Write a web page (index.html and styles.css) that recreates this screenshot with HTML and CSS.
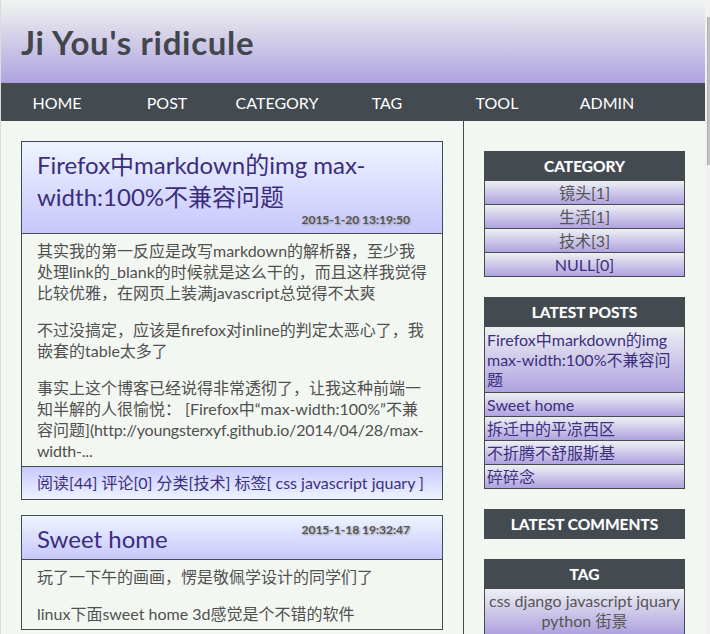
FILE: index.html
```html
<!DOCTYPE html>
<html lang="zh">
<head>
<meta charset="utf-8">
<title>Ji You's ridicule</title>
<link rel="stylesheet" href="styles.css">
</head>
<body>
<header class="site-header">
  <h1 class="site-title">Ji You's ridicule</h1>
</header>
<nav class="site-nav">
  <ul class="nav-list">
    <li><a href="#">HOME</a></li>
    <li><a href="#">POST</a></li>
    <li><a href="#">CATEGORY</a></li>
    <li><a href="#">TAG</a></li>
    <li><a href="#">TOOL</a></li>
    <li><a href="#">ADMIN</a></li>
  </ul>
</nav>
<div class="layout">
  <main class="main-col">
    <article class="post">
      <div class="post-head">
        <h2 class="post-title"><a href="#">Firefox中markdown的img max-width:100%不兼容问题</a></h2>
        <span class="post-date">2015-1-20 13:19:50</span>
      </div>
      <div class="post-body">
        <p>其实我的第一反应是改写markdown的解析器，至少我处理link的_blank的时候就是这么干的，而且这样我觉得比较优雅，在网页上装满javascript总觉得不太爽</p>
        <p>不过没搞定，应该是firefox对inline的判定太恶心了，我嵌套的table太多了</p>
        <p>事实上这个博客已经说得非常透彻了，让我这种前端一知半解的人很愉悦： [Firefox中“max-width:100%”不兼容问题]<span class="url">(http://youngsterxyf.github.io/2014/04/28/max-width-...</span></p>
      </div>
      <div class="post-foot"><a href="#">阅读[44] 评论[0] 分类[技术] 标签[ css javascript jquary ]</a></div>
    </article>
    <article class="post">
      <div class="post-head">
        <h2 class="post-title"><a href="#">Sweet home</a></h2>
        <span class="post-date">2015-1-18 19:32:47</span>
      </div>
      <div class="post-body">
        <p>玩了一下午的画画，愣是敬佩学设计的同学们了</p>
        <p>linux下面sweet home 3d感觉是个不错的软件</p>
      </div>
    </article>
  </main>
  <aside class="sidebar">
    <section class="widget">
      <h3 class="widget-head">CATEGORY</h3>
      <ul class="widget-list centered">
        <li class="plain">镜头[1]</li>
        <li class="plain">生活[1]</li>
        <li class="plain">技术[3]</li>
        <li><a href="#">NULL[0]</a></li>
      </ul>
    </section>
    <section class="widget">
      <h3 class="widget-head">LATEST POSTS</h3>
      <ul class="widget-list">
        <li><a href="#">Firefox中markdown的img max-width:100%不兼容问题</a></li>
        <li><a href="#">Sweet home</a></li>
        <li><a href="#">拆迁中的平凉西区</a></li>
        <li><a href="#">不折腾不舒服斯基</a></li>
        <li><a href="#">碎碎念</a></li>
      </ul>
    </section>
    <section class="widget">
      <h3 class="widget-head">LATEST COMMENTS</h3>
    </section>
    <section class="widget">
      <h3 class="widget-head">TAG</h3>
      <div class="tag-cloud">css django javascript jquary python 街景</div>
    </section>
  </aside>
</div>
<div class="scrollbar"><div class="scrollbar-thumb"></div></div>
</body>
</html>
```
FILE: styles.css
```css
html {
  background: #f3f7f1;
}
body {
  margin: 0;
  border-left: 1px solid #dcdcdc;
  width: 704px;
  min-height: 634px;
  overflow: hidden;
  font-family: Lato, "Noto Sans CJK SC", sans-serif;
  font-size: 16px;
  color: #505050;
  background: #f3f7f1;
}
a {
  color: #3b2f80;
  text-decoration: none;
}

.site-header {
  height: 83px;
  background: linear-gradient(to bottom, #f1f4f0 0%, #afa3df 100%);
  display: flex;
  align-items: center;
}
.site-title {
  margin: 0 0 0 20px;
  font-size: 33px;
  font-weight: 700;
  letter-spacing: 0.7px;
  color: #41474c;
  padding-top: 1px;
}

.site-nav {
  height: 38px;
  background: #434a50;
}
.nav-list {
  list-style: none;
  margin: 0;
  padding: 0 0 0 1px;
  display: flex;
}
.nav-list li {
  width: 110px;
  text-align: center;
  line-height: 40px;
}
.nav-list a {
  color: #ffffff;
  font-size: 16px;
}

.layout {
  display: grid;
  grid-template-columns: 463px 1fr;
  align-items: start;
}
.main-col {
  box-sizing: border-box;
  border-right: 1px solid #434a50;
  padding: 20px 20px 0 20px;
  min-height: 520px;
}

.post {
  border: 1px solid #434a50;
  margin-bottom: 15px;
}
.post-head {
  display: flex;
  flex-wrap: wrap;
  align-items: flex-start;
  justify-content: space-between;
  padding: 7px 32px 4px 15px;
  background: linear-gradient(to bottom, #eef4ff 0%, #c7c7fb 100%);
  border-bottom: 1px solid #434a50;
}
.post-title {
  margin: 0;
  font-size: 24px;
  font-weight: 400;
  line-height: 32px;
}
.post-title a {
  color: #3a2d7e;
}
.post-date {
  margin-left: auto;
  font-size: 12px;
  font-weight: 700;
  line-height: 14px;
  color: #555555;
  text-shadow: 1px 1px 2px #9a9a9a;
  padding-bottom: 2px;
}
.post-body {
  padding: 6px 12px 5px 15px;
  line-height: 21px;
}
.post-body p {
  margin: 0 0 16px;
  word-break: break-all;
}
.post-body p:last-child {
  margin-bottom: 0;
}
.post-body .url {
  letter-spacing: -0.2px;
}
.post-foot {
  border-top: 1px solid #434a50;
  padding: 5px 12px 6px 15px;
  line-height: 21px;
  background: linear-gradient(to bottom, #c9c9fc 0%, #eef3ff 100%);
}

.sidebar {
  padding: 30px 20px 0 20px;
}
.widget {
  width: 201px;
  margin-bottom: 20px;
}
.widget-head {
  margin: 0;
  height: 30px;
  line-height: 30px;
  background: #434a50;
  color: #ffffff;
  font-size: 15.5px;
  font-weight: 700;
  text-align: center;
  text-shadow: 0 0 1px rgba(255, 255, 255, 0.4);
}
.widget-list {
  list-style: none;
  margin: 0;
  padding: 0;
  border-left: 1px solid #434a50;
  border-right: 1px solid #434a50;
}
.widget-list li {
  padding: 2px 0 1px 2px;
  line-height: 20px;
  border-bottom: 1px solid #434a50;
  background: linear-gradient(to bottom, #eef0f3 0%, #afa2df 100%);
}
.widget-list li:first-child {
  padding-top: 3px;
  padding-bottom: 2px;
}
.widget-list.centered li {
  text-align: center;
  padding-left: 0;
}
.widget-list.centered li:first-child {
  padding-top: 2px;
  padding-bottom: 1px;
}
.widget-list .plain {
  color: #555555;
}
.tag-cloud {
  border-left: 1px solid #434a50;
  border-right: 1px solid #434a50;
  padding: 2px 2px 3px;
  line-height: 20px;
  text-align: center;
  color: #555555;
  background: linear-gradient(to bottom, #eef0f3 0%, #afa2df 100%);
}

.scrollbar {
  position: fixed;
  top: 0;
  right: 0;
  width: 5px;
  height: 634px;
  background: #f1f1f1;
}
.scrollbar-thumb {
  margin: 17px 0 0 2px;
  width: 3px;
  height: 148px;
  background: #c1c1c1;
  border-left: 1px solid #b0b0b0;
  box-sizing: border-box;
}
```
